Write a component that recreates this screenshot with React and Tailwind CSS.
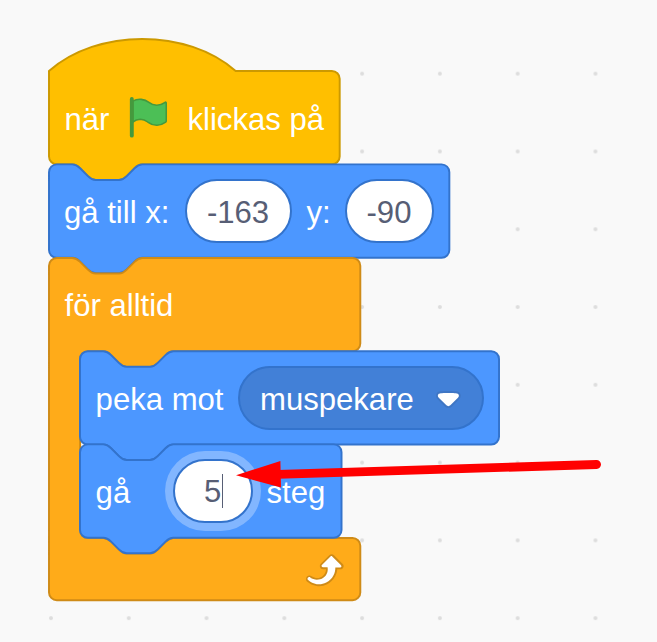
const NOTCH = "H 12 c 2,0 3,1 4,2 l 4,4 c 1,1 2,2 4,2 h 12 c 2,0 3,-1 4,-2 l 4,-4 c 1,-1 2,-2 4,-2";
const BUMP = "c -2,0 -3,1 -4,2 l -4,4 c -1,1 -2,2 -4,2 h -12 c -2,0 -3,-1 -4,-2 l -4,-4 c -1,-1 -2,-2 -4,-2";

const hatPath = (w) =>
  `m 0,0 c 25,-22 71,-22 96,0 H ${w - 4} a 4,4 0 0 1 4,4 v 40 a 4,4 0 0 1 -4,4 H 48 ${BUMP} H 4 a 4,4 0 0 1 -4,-4 z`;
const stackPath = (w) =>
  `m 0,4 A 4,4 0 0 1 4,0 ${NOTCH} H ${w - 4} a 4,4 0 0 1 4,4 v 40 a 4,4 0 0 1 -4,4 H 48 ${BUMP} H 4 a 4,4 0 0 1 -4,-4 z`;
const loopPath = (w) =>
  `m 0,4 A 4,4 0 0 1 4,0 ${NOTCH} H ${w - 4} a 4,4 0 0 1 4,4 v 40 a 4,4 0 0 1 -4,4 H 64 ${BUMP} h -8 a 4,4 0 0 0 -4,4 v 88 a 4,4 0 0 0 4,4 h 8 c 2,0 3,1 4,2 l 4,4 c 1,1 2,2 4,2 h 12 c 2,0 3,-1 4,-2 l 4,-4 c 1,-1 2,-2 4,-2 H ${w - 4} a 4,4 0 0 1 4,4 v 24 a 4,4 0 0 1 -4,4 H 4 a 4,4 0 0 1 -4,-4 z`;

function Shape({ d, fill, stroke, dy = 0.4 }) {
  return (
    <svg className="absolute left-0 top-0 overflow-visible" width="2" height="2">
      <path transform={`translate(0 ${dy}) scale(1.9444)`} d={d} fill={fill} stroke={stroke} strokeWidth="1" />
    </svg>
  );
}

function Row({ children }) {
  return <div className="relative flex h-[93.33px] items-center whitespace-pre">{children}</div>;
}

function Label({ className = "pt-[5px]", children }) {
  return <span className={`block shrink-0 leading-9 ${className}`}>{children}</span>;
}

function Field({ className = "", children }) {
  return (
    <div className={`flex h-16 shrink-0 items-center rounded-full border-2 border-[#3373cc] ${className}`}>
      {children}
    </div>
  );
}

function Flag() {
  return (
    <svg className="-mt-px ml-[14.3px] shrink-0" width="46.7" height="46.7" viewBox="0 0 24 24">
      <path fill="#4cbf56" stroke="#45993d" strokeWidth=".8" strokeLinejoin="round" d="M4 3.7c2.8-1.6 6.1-1.1 8.3.6 2.3 1.9 5.7 1.9 8.1.1q.8-.6.8.3v9.2q0 .4-.3.6c-2.7 2.1-6.5 2-9.2-.1-1.1-.9-2.5-1.4-3.9-1.4-1.4.1-2.7.6-3.8 1.4z" />
      <path stroke="#45993d" strokeWidth="2" strokeLinecap="round" d="M3.5 2.6v18.8" />
    </svg>
  );
}

function Caret() {
  return (
    <svg className="ml-auto mt-[4px]" width="24.9" height="17.7" viewBox="0 0 12.8 9.1">
      <path opacity=".1" fill="#231f20" d="M12.71 2.44A2.41 2.41 0 0 1 12 4.16L8.08 8.08a2.45 2.45 0 0 1-3.45 0L.72 4.16A2.42 2.42 0 0 1 0 2.44 2.48 2.48 0 0 1 .71.71C1 .47 1.43 0 6.36 0S11.75.46 12 .71A2.44 2.44 0 0 1 12.71 2.44Z" />
      <path fill="#fff" d="M6.36 7.79a1.43 1.43 0 0 1-1-.42L1.42 3.45a1.44 1.44 0 0 1 0-2c.56-.56 9.31-.56 9.87 0a1.44 1.44 0 0 1 0 2L7.37 7.37A1.43 1.43 0 0 1 6.36 7.79Z" />
    </svg>
  );
}

function LoopArrow() {
  return (
    <svg width="46.7" height="46.7" viewBox="0 0 24 24">
      <path fill="#cf8b17" d="M23.3,11c-0.3,0.6-0.9,1-1.5,1h-1.6c-0.1,1.3-0.5,2.5-1.1,3.6c-0.9,1.7-2.3,3.2-4.1,4.1c-1.7,0.9-3.6,1.2-5.5,0.9c-1.8-0.3-3.5-1.1-4.9-2.3c-0.7-0.7-0.7-1.9,0-2.6c0.6-0.6,1.6-0.7,2.3-0.2H7c0.9,0.6,1.9,0.9,2.9,0.9s1.9-0.3,2.7-0.9c1.1-0.8,1.8-2.1,1.8-3.5h-1.5c-0.9,0-1.7-0.7-1.7-1.7c0-0.4,0.2-0.9,0.5-1.2l4.4-4.4c0.7-0.6,1.7-0.6,2.4,0L23,9.2C23.5,9.7,23.6,10.4,23.3,11z" />
      <path fill="#fff" d="M21.8,11h-2.6c0,1.5-0.3,2.9-1,4.2c-0.8,1.6-2.1,2.8-3.7,3.6c-1.5,0.8-3.3,1.1-4.9,0.8c-1.6-0.2-3.2-1-4.4-2.1c-0.4-0.3-0.4-0.9-0.1-1.2c0.3-0.4,0.9-0.4,1.2-0.1c1,0.7,2.2,1.1,3.4,1.1s2.3-0.3,3.3-1c0.9-0.6,1.6-1.5,2-2.6c0.3-0.9,0.4-1.8,0.2-2.8h-2.4c-0.4,0-0.7-0.3-0.7-0.7c0-0.2,0.1-0.3,0.2-0.4l4.4-4.4c0.3-0.3,0.7-0.3,0.9,0L22,9.8c0.3,0.3,0.4,0.6,0.3,0.9S22,11,21.8,11z" />
    </svg>
  );
}

function GridDots() {
  return (
    <svg className="absolute inset-0" width="657" height="642">
      <defs>
        <pattern id="dots" x="12.1" y="34.8" width="77.78" height="77.78" patternUnits="userSpaceOnUse">
          <circle cx="38.89" cy="38.89" r="2" fill="#ddd" />
        </pattern>
      </defs>
      <rect width="657" height="642" fill="url(#dots)" />
    </svg>
  );
}

const BLUE = { fill: "#4c97ff", stroke: "#3373cc" };
const GOLD = { fill: "#ffbf00", stroke: "#cc9900" };
const ORANGE = { fill: "#ffab19", stroke: "#cf8b17" };

export default function App() {
  return (
    <main className="relative h-[642px] w-[657px] overflow-hidden bg-[#f9f9f9] pl-[49px] pt-[71px] font-['Liberation_Sans',Arial,sans-serif] text-[31.1px] text-white">
      <GridDots />

      <Row>
        <Shape d={hatPath(149.5)} dy={0} {...GOLD} />
        <div className="relative flex items-center pl-[15.5px]">
          <Label className="w-[46px] pt-[5px]">när</Label>
          <Flag />
          <Label className="ml-[16px] pt-[5px]">klickas på</Label>
        </div>
      </Row>

      <Row>
        <Shape d={stackPath(205.9)} {...BLUE} />
        <div className="relative flex items-center pl-[15px]">
          <Label className="w-[121px] pt-[5px]">gå till x:</Label>
          <Field className="w-[107px] justify-center bg-white pr-px pt-[5px] text-[#575e75]">-163</Field>
          <Label className="ml-[14.5px] w-[38.5px] pt-[5px]">y:</Label>
          <Field className="w-[89px] justify-center bg-white pr-px pt-[5px] text-[#575e75]">-90</Field>
        </div>
      </Row>

      <section className="relative h-[342.2px]">
        <Shape d={loopPath(160.1)} dy={0} {...ORANGE} />
        <Row>
          <Label className="ml-[15.5px] pt-[3px]">för alltid</Label>
        </Row>
        <div className="relative pl-[31.1px]">
          <Row>
            <Shape d={stackPath(215.5)} dy={0.2} {...BLUE} />
            <div className="relative flex items-center pl-[15.5px]">
              <Label className="w-[142.4px] pt-[5px]">peka mot</Label>
              <Field className="w-[246px] bg-[#4280d7] pl-5 pr-[21px]">
                <span className="pt-[5px]">muspekare</span>
                <Caret />
              </Field>
            </div>
          </Row>
          <Row>
            <Shape d={stackPath(134.5)} {...BLUE} />
            <div className="relative flex items-center pl-[15.5px]">
              <Label className="w-[77.4px] pt-[5px]">gå</Label>
              <Field className="w-20 bg-white pl-[29px] text-[#575e75] shadow-[0_0_0_8px_rgba(255,255,255,0.3)]">
                <span className="pt-0.5">5</span>
                <span className="ml-px h-[34px] w-px bg-[#575e75]" />
              </Field>
              <Label className="ml-[13.5px] pt-[5px]">steg</Label>
            </div>
          </Row>
        </div>
        <div className="relative ml-[248.8px] mt-[8px]">
          <LoopArrow />
        </div>
      </section>

      <svg className="absolute inset-0" width="657" height="642" fill="#f00">
        <path d="M236 475.3 280.4 461 281 487.6z" />
        <path d="M278 474.4 596.6 464.5" stroke="#f00" strokeWidth="8.8" strokeLinecap="round" />
      </svg>
    </main>
  );
}
